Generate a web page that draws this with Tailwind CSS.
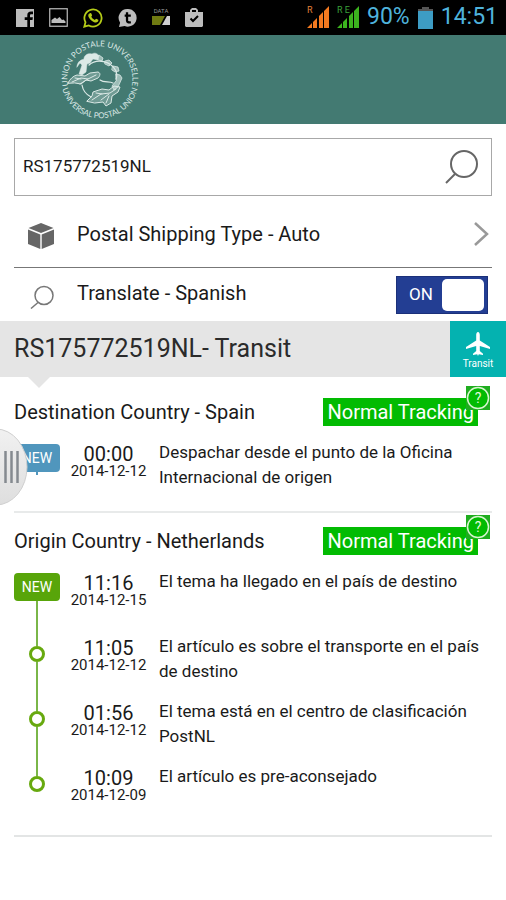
<!DOCTYPE html>
<html lang="en">
<head>
  <meta charset="UTF-8" />
  <meta name="viewport" content="width=device-width, initial-scale=1.0" />
  <title>Postal Tracking</title>
  <script src="https://cdn.jsdelivr.net/npm/@tailwindcss/browser@4"></script>
</head>
<body class="bg-white text-[#1a1a1a] font-['Roboto',sans-serif] min-h-screen">

<!-- Status bar -->
<div class="h-[35px] bg-black flex items-center justify-between pl-4 pr-2">
  <div class="flex items-center gap-[15px] text-[#bdbdbd]">
    <svg class="w-[18px] h-[18px]" viewBox="0 0 18 18"><path fill="currentColor" d="M0 0h18v18h-4v-7h2.500l.4-2.800H14V6.600c0-.9.300-1.400 1.500-1.400H17V2.600c-.4 0-1.200-.1-2-.1-2.300 0-3.700 1.300-3.700 3.700v2H8.700V11h2.600v7H0z"/></svg>
    <svg class="w-[19px] h-[19px]" viewBox="0 0 19 19"><rect x=".75" y=".75" width="17.500" height="17.500" fill="none" stroke="currentColor" stroke-width="1.200"/><path fill="currentColor" d="M2.500 15v-3l3.500-2.500 2 1.500 2.500-2 2.500 3 1.500-.5 2 2V15z"/></svg>
    <svg class="w-[20px] h-[20px]" viewBox="0 0 20 20"><path fill="none" stroke="#b5cc18" stroke-width="1.800" d="M1.300 18.700l1.200-4.500A8.600 8.600 0 1 1 5.800 17.500z"/><path fill="#b5cc18" d="M6.500 5.500l1-.5c.4 0 .6.100.8.500l.8 1.800c.1.400-.7 1.200-.8 1.500.8 1.500 2 2.500 3.500 3.200.4-.1 1-1.200 1.400-1.200l2 1c.4.300.1 1.500-.5 2-1 .8-2.300.9-4 .1-2.300-1-4.300-3-5.200-5.200-.5-1.300-.2-2.500 1-3.200z"/></svg>
    <svg class="w-[19px] h-[20px]" viewBox="0 0 20 20"><path fill="currentColor" d="M10.500.5a9.300 9.300 0 1 1-3.500 18L1 19.500l1.200-4.600A9.300 9.300 0 0 1 10.500.5z"/><path fill="none" stroke="#000" stroke-width="2.400" d="M9.500 4v8.500c0 1.800 1.500 2.500 4 1.800M7 7.500h6.500"/></svg>
    <svg class="w-[18px] h-[20px]" viewBox="0 0 18 20"><text x="9" y="5" text-anchor="middle" font-size="6" fill="#999">DATA</text><path fill="#6f7a12" d="M0 8h13l-5 9H0z"/><path fill="#d0d0d0" d="M18 8v9h-8l5-9z"/></svg>
    <svg class="w-[18px] h-[19px]" viewBox="0 0 18 19"><path fill="currentColor" d="M0 4h5V2l2-2h4l2 2v2h5v14l-1 1H1l-1-1zM7 4h4V2H7z"/><path fill="none" stroke="#000" stroke-width="2" d="M5.500 10.500l2.500 2.500 5-5"/></svg>
  </div>
  <div class="flex items-center gap-2 text-[23px] text-[#4fb3dc]">
    <svg class="w-[22px] h-[24px]" viewBox="0 0 22 24"><text x="0" y="7" font-size="9" fill="#e0813a">R</text><path fill="#f47a20" d="M0 22l5-5v5zM6 22v-6l4-4v10zM12 22V10l4-4v16zM17 22V5l5-5v22z"/></svg>
    <svg class="w-[22px] h-[24px]" viewBox="0 0 22 24"><text x="0" y="7" font-size="9" fill="#3aa03a">R E</text><path fill="#3cb41e" d="M0 22l5-5v5zM6 22v-6l4-4v10zM12 22V10l4-4v16zM17 22V5l5-5v22z"/></svg>
    <span>90%</span>
    <svg class="w-[15px] h-[22px]" viewBox="0 0 15 22"><path fill="#555" d="M0 2h4V0h7v2h4v3H0z"/><path fill="#3d9cc4" d="M0 4h15v18H0z"/></svg>
    <span>14:51</span>
  </div>
</div>

<!-- Header -->
<header class="h-[89px] bg-[#437a72] px-[60px] flex items-center">
  <svg class="w-20 h-20" viewBox="0 0 80 80" fill="none" stroke="#dbe9e6" stroke-linecap="round" stroke-linejoin="round" role="img" aria-label="Universal Postal Union">
    <defs>
      <path id="top" d="M8.300 46A32.500 32.500 0 1 1 71.700 46"/>
      <path id="bottom" d="M1.500 43.500A38.700 38.700 0 0 0 78.500 43.500"/>
    </defs>
    <g fill="#dbe9e6" stroke="none" font-family="Lato, sans-serif" font-size="8" text-anchor="middle">
      <text><textPath href="#top" startOffset="50%">UNION POSTALE UNIVERSELLE</textPath></text>
      <text><textPath href="#bottom" startOffset="50%">UNIVERSAL POSTAL UNION</textPath></text>
    </g>
    <!-- globe -->
    <path stroke-width="1.200" d="M29 25c8-7 22-4 27 6 1 3 1 6 0 8M22 45c1 6 5 10 9 12M40 40c4 3 9 1 13 3"/>
    <!-- seated figure -->
    <path fill="#dbe9e6" stroke-width=".5" d="M17 26c1-5 4-6 7-7 0-4 4-6 8-5 3-2 6 0 7 2l-1 4-5-1-3 4-3 1-1 8-4 3-3-1 3-9-2-2-3 4z"/>
    <!-- clouds -->
    <path fill="#dbe9e6" fill-opacity=".3" stroke-width="1" d="M8 43c2-4 5-7 9-8l8 1 5-3 8-1c3 1 2 4 0 6l-7 3-5-1-5 4-6-1z"/>
    <path stroke-width="1" d="M12 42l9-4 7 1 8-4M15 38l6 1M20 44l8-5"/>
    <path fill="#dbe9e6" fill-opacity=".3" stroke-width="1" d="M27 61l5-5 1-4 9-3 7 1 5-4 6 1-2 5-6 4-1 7-5 3-3-4-8 1z"/>
    <path stroke-width="1" d="M32 60l9-6 9-1 6-4M36 53l6 1M41 60l8-6M46 63l3-7"/>
    <!-- messengers round the globe -->
    <path fill="#dbe9e6" fill-opacity=".6" stroke-width=".8" d="M36 17l3-2 4 3-1 3-4-1zM45 21l4-1 3 3-3 3-4-2zM53 26l5 1 1 4-4 1-3-2zM56 34l4 1 2 3-4 9-4 3-2-4 4-5z"/>
  </svg>
</header>

<main>
  <div class="px-[14px] pt-[14px]">
    <!-- Search -->
    <form class="h-[58px] border border-[#a8a8a8] flex items-center pl-2 pr-3">
      <input type="text" aria-label="Tracking number" value="RS175772519NL" class="flex-1 min-w-0 text-[17px] outline-none" />
      <button type="button" aria-label="Search">
        <svg class="w-9 h-9" viewBox="0 0 36 36" fill="none" stroke="#666" stroke-width="2"><circle cx="21" cy="15" r="13"/><path d="M12 25l-9 9"/></svg>
      </button>
    </form>

    <!-- Options -->
    <button type="button" class="w-full h-[72px] border-b border-[#777] flex items-center text-left text-[20px]">
      <svg class="w-7 h-7 ml-[13px] mt-2 mr-[22px]" viewBox="0 0 28 28" fill="#666"><path d="M14 1l12.500 5L14 11 1.500 6zM1 7.500l12.300 5V27L1 22zM27 7.500l-12.300 5V27L27 22z"/></svg>
      <span class="flex-1 pt-1">Postal Shipping Type - Auto</span>
      <svg class="w-4 h-6 mr-[3px] mt-1" viewBox="0 0 16 24" fill="none" stroke="#999" stroke-width="2.500"><path d="M2 1l12 11L2 23"/></svg>
    </button>
    <div class="h-[53px] flex items-center text-[20px]">
      <svg class="w-6 h-6 ml-4 mt-1 mr-[23px]" viewBox="0 0 24 24" fill="none" stroke="#777" stroke-width="1.500"><circle cx="14" cy="10.500" r="9"/><path d="M8 17.500L1 23.500"/></svg>
      <label for="translate" class="flex-1 pb-1">Translate - Spanish</label>
      <label class="w-[92px] h-[38px] mr-1 bg-[#233e93] border border-[#1b3079] flex items-center justify-between pl-3 pr-[3px] text-[17px] text-white">
        <input id="translate" type="checkbox" checked class="sr-only" />
        ON
        <span class="w-[42px] h-8 rounded-[5px] bg-white"></span>
      </label>
    </div>
  </div>

  <!-- Current state -->
  <div class="h-14 bg-[#e5e5e5] flex items-center justify-between pl-[14px]">
    <h1 class="text-[25px] text-[#2b2b2b]">RS175772519NL- Transit</h1>
    <div class="w-14 h-14 bg-[#04b2b0] text-white text-[10px] flex flex-col items-center justify-center">
      <svg class="w-6 h-6 mt-1" viewBox="0 0 24 24" fill="currentColor"><path d="M12 0c1.200 0 1.800 1.500 1.800 3v5.500L24 15v2l-10.200-3v5l3.200 2.800V23l-4.200-.8L12 24l-.8-1.800L7 23v-1.200l3.200-2.800v-5L0 17v-2l10.200-6.500V3C10.200 1.500 10.800 0 12 0z"/></svg>
      <span>Transit</span>
    </div>
  </div>
  <svg class="w-[22px] h-[11px] ml-7 -mb-1" viewBox="0 0 22 11"><path fill="#e5e5e5" d="M0 0h22L11 11z"/></svg>

  <!-- Destination -->
  <section class="relative px-[14px]">
    <div class="border-b-2 border-[#e8eaea] pb-[6px]">
      <div class="h-14 flex items-center justify-between">
        <h2 class="text-[20px]">Destination Country - Spain</h2>
        <div class="relative mr-[14px] h-7 px-1 bg-[#02bb02] text-white text-[20px] leading-7">
          Normal Tracking
          <button type="button" aria-label="Help" class="absolute -top-3 -right-3 bg-[#1fad1f]">
            <svg class="w-6 h-6" viewBox="0 0 24 24"><circle cx="12" cy="12" r="10.500" fill="#02bb02" stroke="#d9f5d0" stroke-width="1.500"/><text x="12" y="17" text-anchor="middle" font-size="14" fill="#e4f9dc">?</text></svg>
          </button>
        </div>
      </div>
      <ol>
        <li class="h-[65px] flex">
          <div class="w-[46px] flex flex-col items-center pt-1">
            <span class="w-full h-7 rounded bg-[#5096bd] text-white text-[14px] leading-7 text-center">NEW</span>
            <span class="w-0.5 h-[3px] bg-[#5096bd]"></span>
          </div>
          <div class="w-[97px] pt-1 text-center">
            <div class="text-[20px] leading-5">00:00</div>
            <div class="text-[15px] leading-[14px]">2014-12-12</div>
          </div>
          <p class="flex-1 pl-[2px] text-[17px] leading-[25px]">Despachar desde el punto de la Oficina Internacional de origen</p>
        </li>
      </ol>
    </div>

    <!-- Drawer handle -->
    <button type="button" aria-label="Open menu" class="absolute left-0 top-11">
      <svg class="w-7 h-20" viewBox="0 0 28 80">
        <defs>
          <linearGradient id="handle" x1="0" y1="0" x2="0" y2="1"><stop offset="0" stop-color="#f1f1f1"/><stop offset="1" stop-color="#dedede"/></linearGradient>
        </defs>
        <ellipse cx="-4" cy="39" rx="31" ry="38" fill="url(#handle)" stroke="#cfcfcf"/>
        <path d="M5.500 23v32M11.500 23v32M17.500 23v32" stroke="#858a90" stroke-width="2.500"/>
      </svg>
    </button>
  </section>

  <!-- Origin -->
  <section class="px-[14px]">
    <div class="border-b-2 border-[#e3e5e5] pb-[6px]">
      <div class="h-14 flex items-center justify-between">
        <h2 class="text-[20px]">Origin Country - Netherlands</h2>
        <div class="relative mr-[14px] h-7 px-1 bg-[#02bb02] text-white text-[20px] leading-7">
          Normal Tracking
          <button type="button" aria-label="Help" class="absolute -top-3 -right-3 bg-[#1fad1f]">
            <svg class="w-6 h-6" viewBox="0 0 24 24"><circle cx="12" cy="12" r="10.500" fill="#02bb02" stroke="#d9f5d0" stroke-width="1.500"/><text x="12" y="17" text-anchor="middle" font-size="14" fill="#e4f9dc">?</text></svg>
          </button>
        </div>
      </div>
      <ol>
        <li class="h-[65px] flex">
          <div class="w-[46px] flex flex-col items-center pt-1">
            <span class="w-full h-7 rounded bg-[#58a50a] text-white text-[14px] leading-7 text-center">NEW</span>
            <span class="w-0.5 flex-1 bg-[#7ab648]"></span>
          </div>
          <div class="w-[97px] pt-1 text-center">
            <div class="text-[20px] leading-5">11:16</div>
            <div class="text-[15px] leading-[14px]">2014-12-15</div>
          </div>
          <p class="flex-1 pl-[2px] text-[17px] leading-[25px]">El tema ha llegado en el país de destino</p>
        </li>
        <li class="h-[65px] flex">
          <div class="w-[46px] flex flex-col items-center">
            <span class="w-0.5 h-3 bg-[#7ab648]"></span>
            <span class="w-4 h-4 rounded-full border-3 border-[#67a90f]"></span>
            <span class="w-0.5 flex-1 bg-[#7ab648]"></span>
          </div>
          <div class="w-[97px] pt-1 text-center">
            <div class="text-[20px] leading-5">11:05</div>
            <div class="text-[15px] leading-[14px]">2014-12-12</div>
          </div>
          <p class="flex-1 pl-[2px] text-[17px] leading-[25px]">El artículo es sobre el transporte en el país de destino</p>
        </li>
        <li class="h-[65px] flex">
          <div class="w-[46px] flex flex-col items-center">
            <span class="w-0.5 h-3 bg-[#7ab648]"></span>
            <span class="w-4 h-4 rounded-full border-3 border-[#67a90f]"></span>
            <span class="w-0.5 flex-1 bg-[#7ab648]"></span>
          </div>
          <div class="w-[97px] pt-1 text-center">
            <div class="text-[20px] leading-5">01:56</div>
            <div class="text-[15px] leading-[14px]">2014-12-12</div>
          </div>
          <p class="flex-1 pl-[2px] text-[17px] leading-[25px]">El tema está en el centro de clasificación PostNL</p>
        </li>
        <li class="h-[65px] flex">
          <div class="w-[46px] flex flex-col items-center">
            <span class="w-0.5 h-3 bg-[#7ab648]"></span>
            <span class="w-4 h-4 rounded-full border-3 border-[#67a90f]"></span>
          </div>
          <div class="w-[97px] pt-1 text-center">
            <div class="text-[20px] leading-5">10:09</div>
            <div class="text-[15px] leading-[14px]">2014-12-09</div>
          </div>
          <p class="flex-1 pl-[2px] text-[17px] leading-[25px]">El artículo es pre-aconsejado</p>
        </li>
      </ol>
    </div>
  </section>
</main>

</body>
</html>
